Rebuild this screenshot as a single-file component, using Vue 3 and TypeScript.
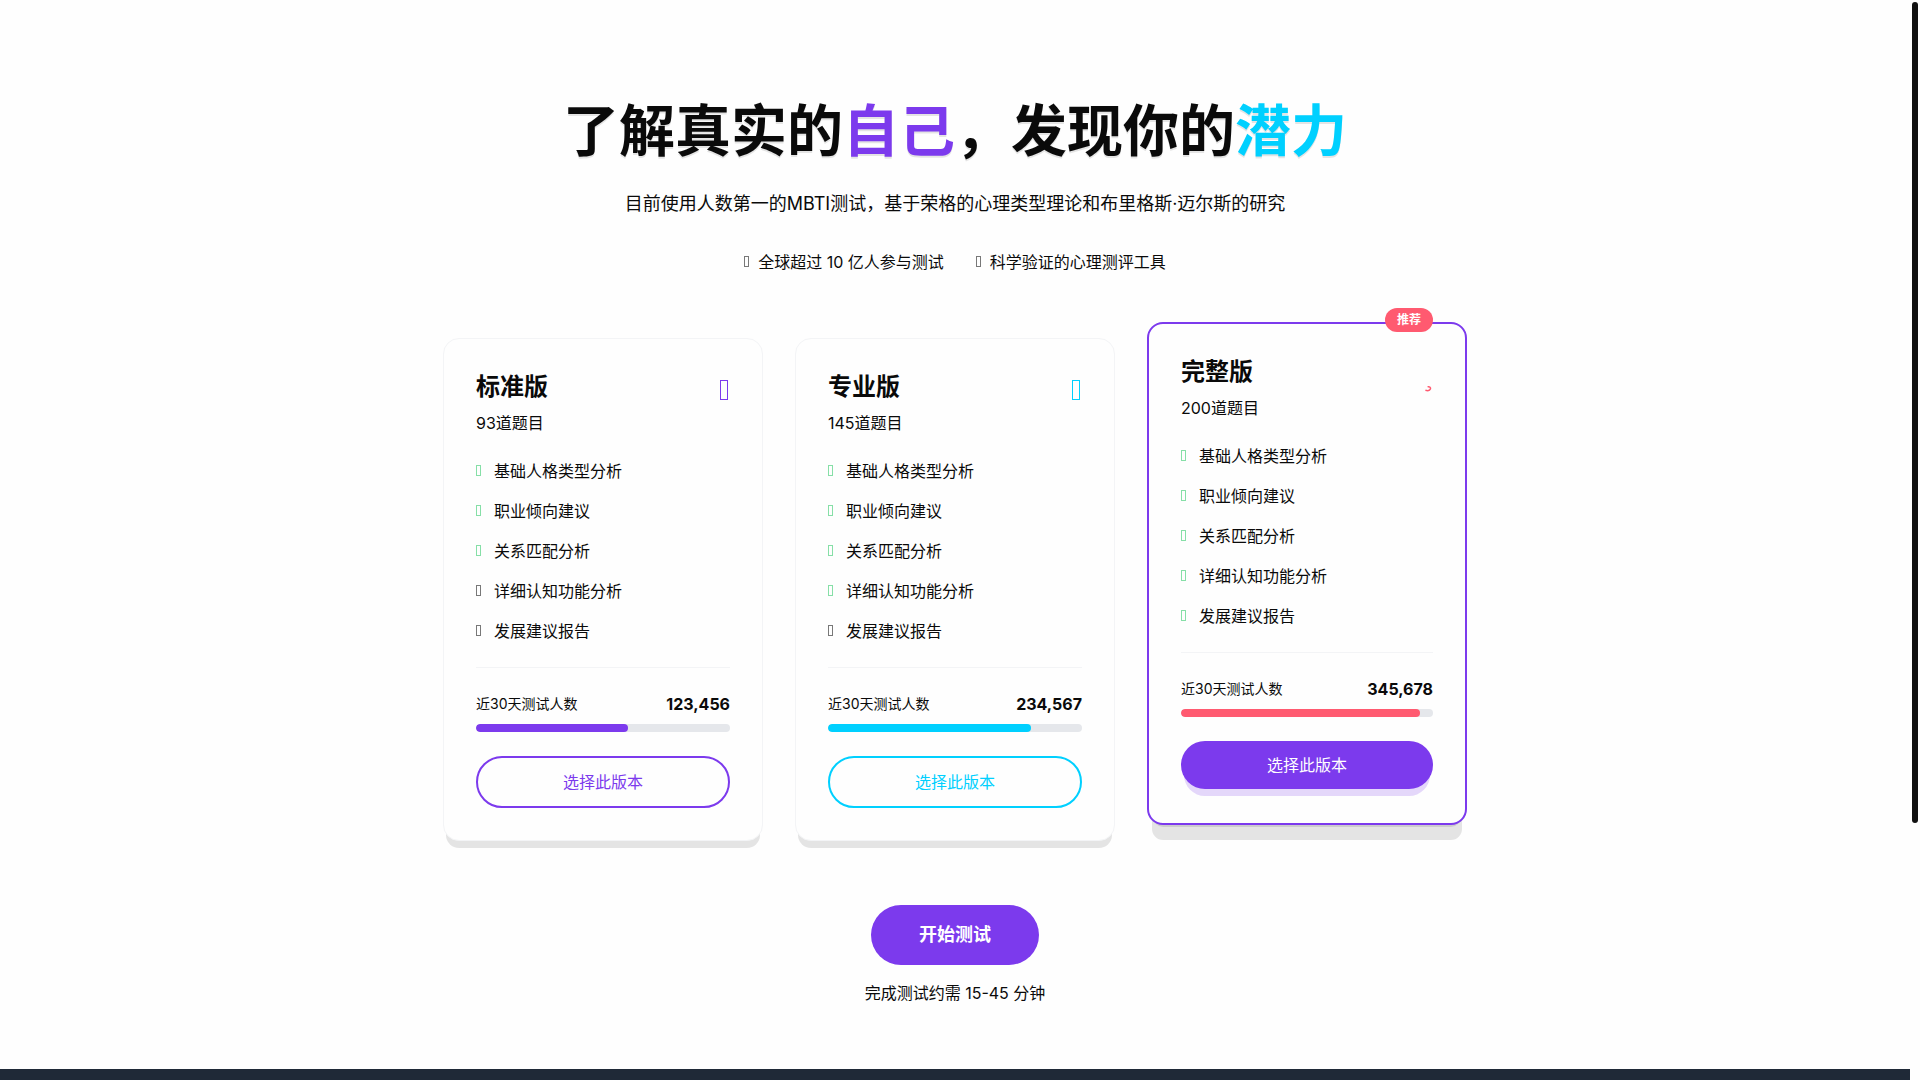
<script setup lang="ts">
interface Plan {
  name: string
  questions: number
  tone: string
  included: number
  testers: string
  share: number
  featured?: boolean
}

const features: string[] = [
  '基础人格类型分析',
  '职业倾向建议',
  '关系匹配分析',
  '详细认知功能分析',
  '发展建议报告',
]

const plans: Plan[] = [
  { name: '标准版', questions: 93, tone: 'violet', included: 3, testers: '123,456', share: 60 },
  { name: '专业版', questions: 145, tone: 'cyan', included: 4, testers: '234,567', share: 80 },
  { name: '完整版', questions: 200, tone: 'coral', included: 5, testers: '345,678', share: 95, featured: true },
]

const stats: string[] = ['全球超过 10 亿人参与测试', '科学验证的心理测评工具']
</script>

<template>
  <div class="page">
    <main class="hero">
      <h1>了解真实的<span class="violet-text">自己</span>，发现你的<span class="cyan-text">潜力</span></h1>
      <p class="lead">目前使用人数第一的MBTI测试，基于荣格的心理类型理论和布里格斯·迈尔斯的研究</p>

      <div class="stats">
        <div v-for="stat in stats" :key="stat" class="stat">
          <svg class="mark" viewBox="0 0 6 24" aria-hidden="true">
            <rect x="0.5" y="6.5" width="4" height="10" />
          </svg>
          <span>{{ stat }}</span>
        </div>
      </div>

      <div class="plans">
        <article
          v-for="plan in plans"
          :key="plan.name"
          class="card"
          :class="[plan.tone, { featured: plan.featured }]"
        >
          <span v-if="plan.featured" class="badge">推荐</span>
          <header class="card-head">
            <div>
              <h2>{{ plan.name }}</h2>
              <p class="questions">{{ plan.questions }}道题目</p>
            </div>
            <svg class="plan-icon" viewBox="0 0 10 38" aria-hidden="true">
              <path
                v-if="plan.featured"
                d="M4.6 30.8C6.8 30.4 8 31.6 7.4 33C6.8 34.6 4.6 34.9 2.4 34.2"
                stroke-width="1.5"
              />
              <rect v-else x="0.5" y="9.5" width="7" height="19" />
            </svg>
          </header>
          <ul class="features">
            <li v-for="(feature, index) in features" :key="feature">
              <svg class="mark" :class="{ check: index < plan.included }" viewBox="0 0 6 24" aria-hidden="true">
                <rect x="0.5" y="6.5" width="4" height="10" />
              </svg>
              <span>{{ feature }}</span>
            </li>
          </ul>
          <div class="usage">
            <div class="usage-row">
              <span class="usage-label">近30天测试人数</span>
              <strong>{{ plan.testers }}</strong>
            </div>
            <div class="track">
              <div class="fill" :style="{ width: plan.share + '%' }"></div>
            </div>
          </div>
          <button type="button" class="choose">选择此版本</button>
        </article>
      </div>

      <button type="button" class="start">开始测试</button>
      <p class="duration">完成测试约需 15-45 分钟</p>
    </main>
    <footer class="footer"></footer>
    <div class="scroll-thumb" aria-hidden="true"></div>
  </div>
</template>

<style>
body {
  margin: 0;
}
</style>

<style scoped>
.page {
  display: flex;
  flex-direction: column;
  min-height: 100vh;
  padding-right: 10px;
  box-sizing: border-box;
  background: #fefefe;
  color: #0a0a0a;
  font-family: Inter, "Noto Sans CJK SC", sans-serif;
  font-size: 16px;
  line-height: 24px;
}

.page * {
  box-sizing: border-box;
}

.scroll-thumb {
  position: fixed;
  top: 2px;
  right: 2px;
  width: 6px;
  height: 76vh;
  border-radius: 3px;
  background: #111;
}

.hero {
  display: flex;
  flex-direction: column;
  align-items: center;
  width: 100%;
  max-width: 1024px;
  margin: 0 auto;
  padding: 96px 0 64px;
}

h1,
h2,
p,
ul {
  margin: 0;
  padding: 0;
}

h1 {
  margin-bottom: 24px;
  font-size: 56px;
  font-weight: 700;
  line-height: 70px;
  text-align: center;
  text-shadow: 0 2px 0 rgba(0, 0, 0, 0.1);
}

.violet-text {
  color: #7c3aed;
}

.cyan-text {
  color: #00d0ff;
}

.lead {
  margin-bottom: 32px;
  font-size: 18px;
  line-height: 28px;
  text-align: center;
}

.stats {
  display: flex;
  flex-wrap: wrap;
  justify-content: center;
  gap: 32px;
  margin-bottom: 64px;
}

.stat {
  display: flex;
  align-items: center;
  gap: 8px;
}

.mark {
  flex: none;
  width: 6px;
  height: 24px;
  fill: none;
  stroke: #0a0a0a;
  stroke-opacity: 0.55;
}

.mark.check {
  stroke: #22c55e;
}

.plans {
  display: grid;
  grid-template-columns: repeat(3, 1fr);
  gap: 32px;
  width: 100%;
  margin-bottom: 64px;
}

.card {
  position: relative;
  padding: 32px;
  border: 1px solid #f3f4f6;
  border-radius: 16px;
  background: #fefefe;
  box-shadow: 0 10px 0 -3px rgba(0, 0, 0, 0.1);
}

.violet {
  --tone: #7c3aed;
}

.cyan {
  --tone: #00d0ff;
}

.coral {
  --tone: #ff5a70;
}

.featured {
  border: 2px solid #7c3aed;
  box-shadow: 0 20px 0 -5px rgba(0, 0, 0, 0.1), 0 8px 0 -6px rgba(0, 0, 0, 0.1);
  transform: translateY(-16px);
}

.badge {
  position: absolute;
  top: -16px;
  right: 32px;
  padding: 4px 12px;
  border-radius: 12px;
  background: #ff5a70;
  color: #fff;
  font-size: 12px;
  font-weight: 700;
  line-height: 16px;
}

.card-head {
  display: flex;
  justify-content: space-between;
  align-items: flex-start;
  margin-bottom: 24px;
}

h2 {
  margin-bottom: 8px;
  font-size: 24px;
  font-weight: 700;
  line-height: 32px;
}

.plan-icon {
  flex: none;
  width: 10px;
  height: 38px;
  fill: none;
  stroke: var(--tone);
}

.features {
  display: flex;
  flex-direction: column;
  gap: 16px;
  margin-bottom: 24px;
  list-style: none;
}

.features li {
  display: flex;
  align-items: center;
  gap: 12px;
}

.usage {
  margin-bottom: 24px;
  padding-top: 24px;
  border-top: 1px solid #f3f4f6;
}

.usage-row {
  display: flex;
  justify-content: space-between;
  align-items: center;
  margin-bottom: 8px;
}

.usage-label {
  font-size: 14px;
  line-height: 20px;
}

.track {
  height: 8px;
  overflow: hidden;
  border-radius: 4px;
  background: #e5e7eb;
}

.fill {
  height: 100%;
  border-radius: 4px;
  background: var(--tone);
}

button {
  font-family: inherit;
  cursor: pointer;
}

.choose {
  display: block;
  width: 100%;
  padding: 12px 24px;
  border: 2px solid var(--tone);
  border-radius: 26px;
  background: transparent;
  color: var(--tone);
  font-size: 16px;
  line-height: 24px;
}

.featured .choose {
  border: 0;
  background: #7c3aed;
  color: #fff;
  box-shadow: 0 10px 0 -3px rgba(124, 58, 237, 0.2);
}

.start {
  padding: 16px 48px;
  border: 0;
  border-radius: 30px;
  background: #7c3aed;
  color: #fff;
  font-size: 18px;
  font-weight: 700;
  line-height: 28px;
}

.duration {
  margin-top: 16px;
}

.footer {
  flex: 1;
  background: #1f2937;
}
</style>
